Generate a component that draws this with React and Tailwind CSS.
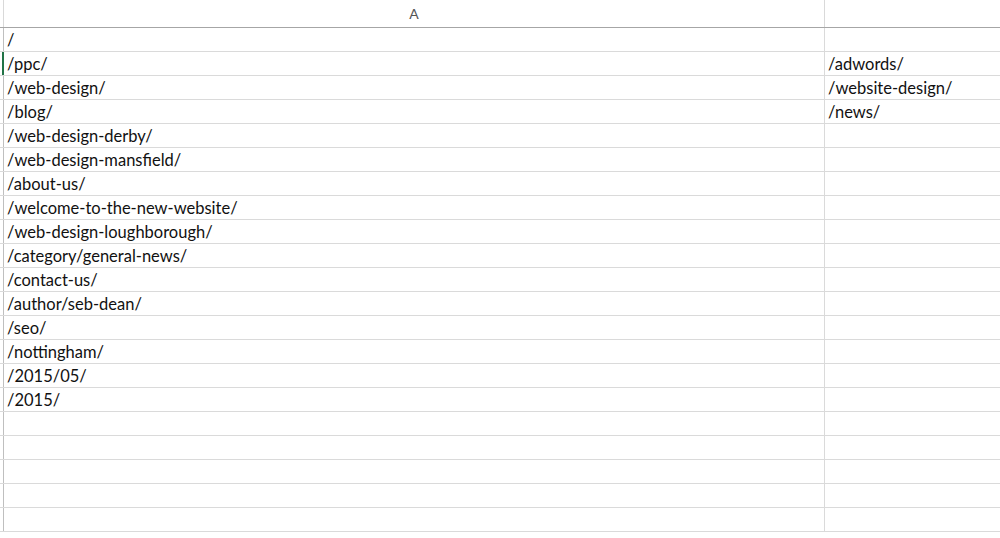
const colA = [
  "/",
  "/ppc/",
  "/web-design/",
  "/blog/",
  "/web-design-derby/",
  "/web-design-mansfield/",
  "/about-us/",
  "/welcome-to-the-new-website/",
  "/web-design-loughborough/",
  "/category/general-news/",
  "/contact-us/",
  "/author/seb-dean/",
  "/seo/",
  "/nottingham/",
  "/2015/05/",
  "/2015/",
];

const colB = ["", "/adwords/", "/website-design/", "/news/"];

export default function App() {
  const rows = Array.from({ length: 21 }, (_, i) => i);

  return (
    <div
      className="w-[1000px] h-[538px] overflow-hidden bg-white text-[#111]"
      style={{ fontFamily: "Lato, 'Open Sans', sans-serif" }}
    >
      {/* Header */}
      <div className="flex h-[28px] border-b border-[#a6a6a6]">
        <div className="w-[4px] border-r border-[#d9d9d9]"></div>
        <div className="w-[821px] border-r border-[#d9d9d9] flex items-center justify-center text-[14px] text-[#555] pb-[1px]">
          A
        </div>
        <div className="flex-1"></div>
      </div>

      {/* Linhas */}
      {rows.map((i) => (
        <div key={i} className="flex h-[24px] border-b border-[#dadada]">
          <div
            className={`w-[4px] border-r ${
              i === 1 ? "border-[#217346] border-r-2" : "border-[#bfbfbf]"
            }`}
          ></div>
          <div className="w-[821px] border-r border-[#dadada] flex items-end pl-[3px] pb-[1px] text-[16.5px] leading-[20px]">
            {colA[i] || ""}
          </div>
          <div className="flex-1 flex items-end pl-[3px] pb-[1px] text-[16.5px] leading-[20px]">
            {colB[i] || ""}
          </div>
        </div>
      ))}
    </div>
  );
}
